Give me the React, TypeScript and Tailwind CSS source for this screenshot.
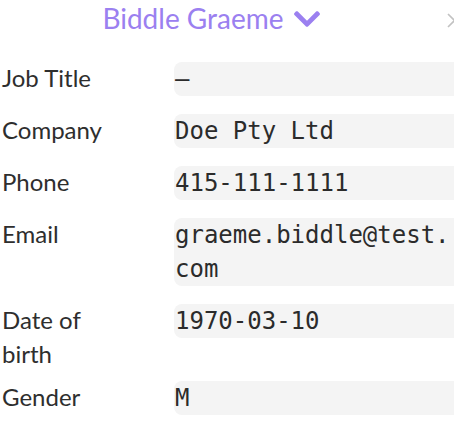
import React from 'react';

const fields: { label: string; value: string }[] = [
  { label: 'Job Title', value: '–' },
  { label: 'Company', value: 'Doe Pty Ltd' },
  { label: 'Phone', value: '415-111-1111' },
  { label: 'Email', value: 'graeme.biddle@test.com' },
  { label: 'Date of birth', value: '1970-03-10' },
  { label: 'Gender', value: 'M' },
];

const ChevronDown = () => (
  <svg viewBox="5 123 438 266" width="26" height="16" fill="currentColor" aria-hidden="true">
    <path d="M207.029 381.476L12.686 187.132c-9.373-9.373-9.373-24.569 0-33.941l22.667-22.667c9.357-9.357 24.522-9.375 33.901-.04L224 284.505l154.745-154.021c9.379-9.335 24.544-9.317 33.901.04l22.667 22.667c9.373 9.373 9.373 24.569 0 33.941L240.971 381.476c-9.373 9.372-24.569 9.372-33.942 0z" />
  </svg>
);

export default function App() {
  return (
    <div className="relative w-[454px] h-[448px] overflow-hidden bg-white font-['Lato','Noto_Sans',sans-serif] text-[#2e2e2e]">
      {/* Header */}
      <header className="relative h-[53px] pt-px pr-[32px] flex justify-center items-start">
        <button className="flex items-center gap-[10px] text-[28px] leading-[34px] text-[#9b80f0]">
          <span>Biddle Graeme</span>
          <span className="mt-[1px]"><ChevronDown /></span>
        </button>
        {/* close button, clipped by the panel edge */}
        <svg className="absolute left-[447px] top-[13px]" width="15" height="15" viewBox="0 0 15 15" aria-label="Close">
          <path d="M1 1L14 14M14 1L1 14" stroke="#c2c2c2" strokeWidth="1.6" fill="none" />
        </svg>
      </header>

      {/* Details */}
      <div className="w-[462px]">
        {fields.map((f) => (
          <div key={f.label} className="flex items-start">
            <div className="w-[174px] shrink-0 pl-[2px] pt-[8px] pb-px pr-[50px] text-[24px] leading-[34px]">{f.label}</div>
            <div className="flex-1 my-[9px] rounded-lg bg-[#f4f4f4] px-px text-[24px] leading-[34px] text-[#2b2b2b] font-['DejaVu_Sans_Mono',monospace] break-all">
              {f.value}
            </div>
          </div>
        ))}
      </div>
    </div>
  );
}
